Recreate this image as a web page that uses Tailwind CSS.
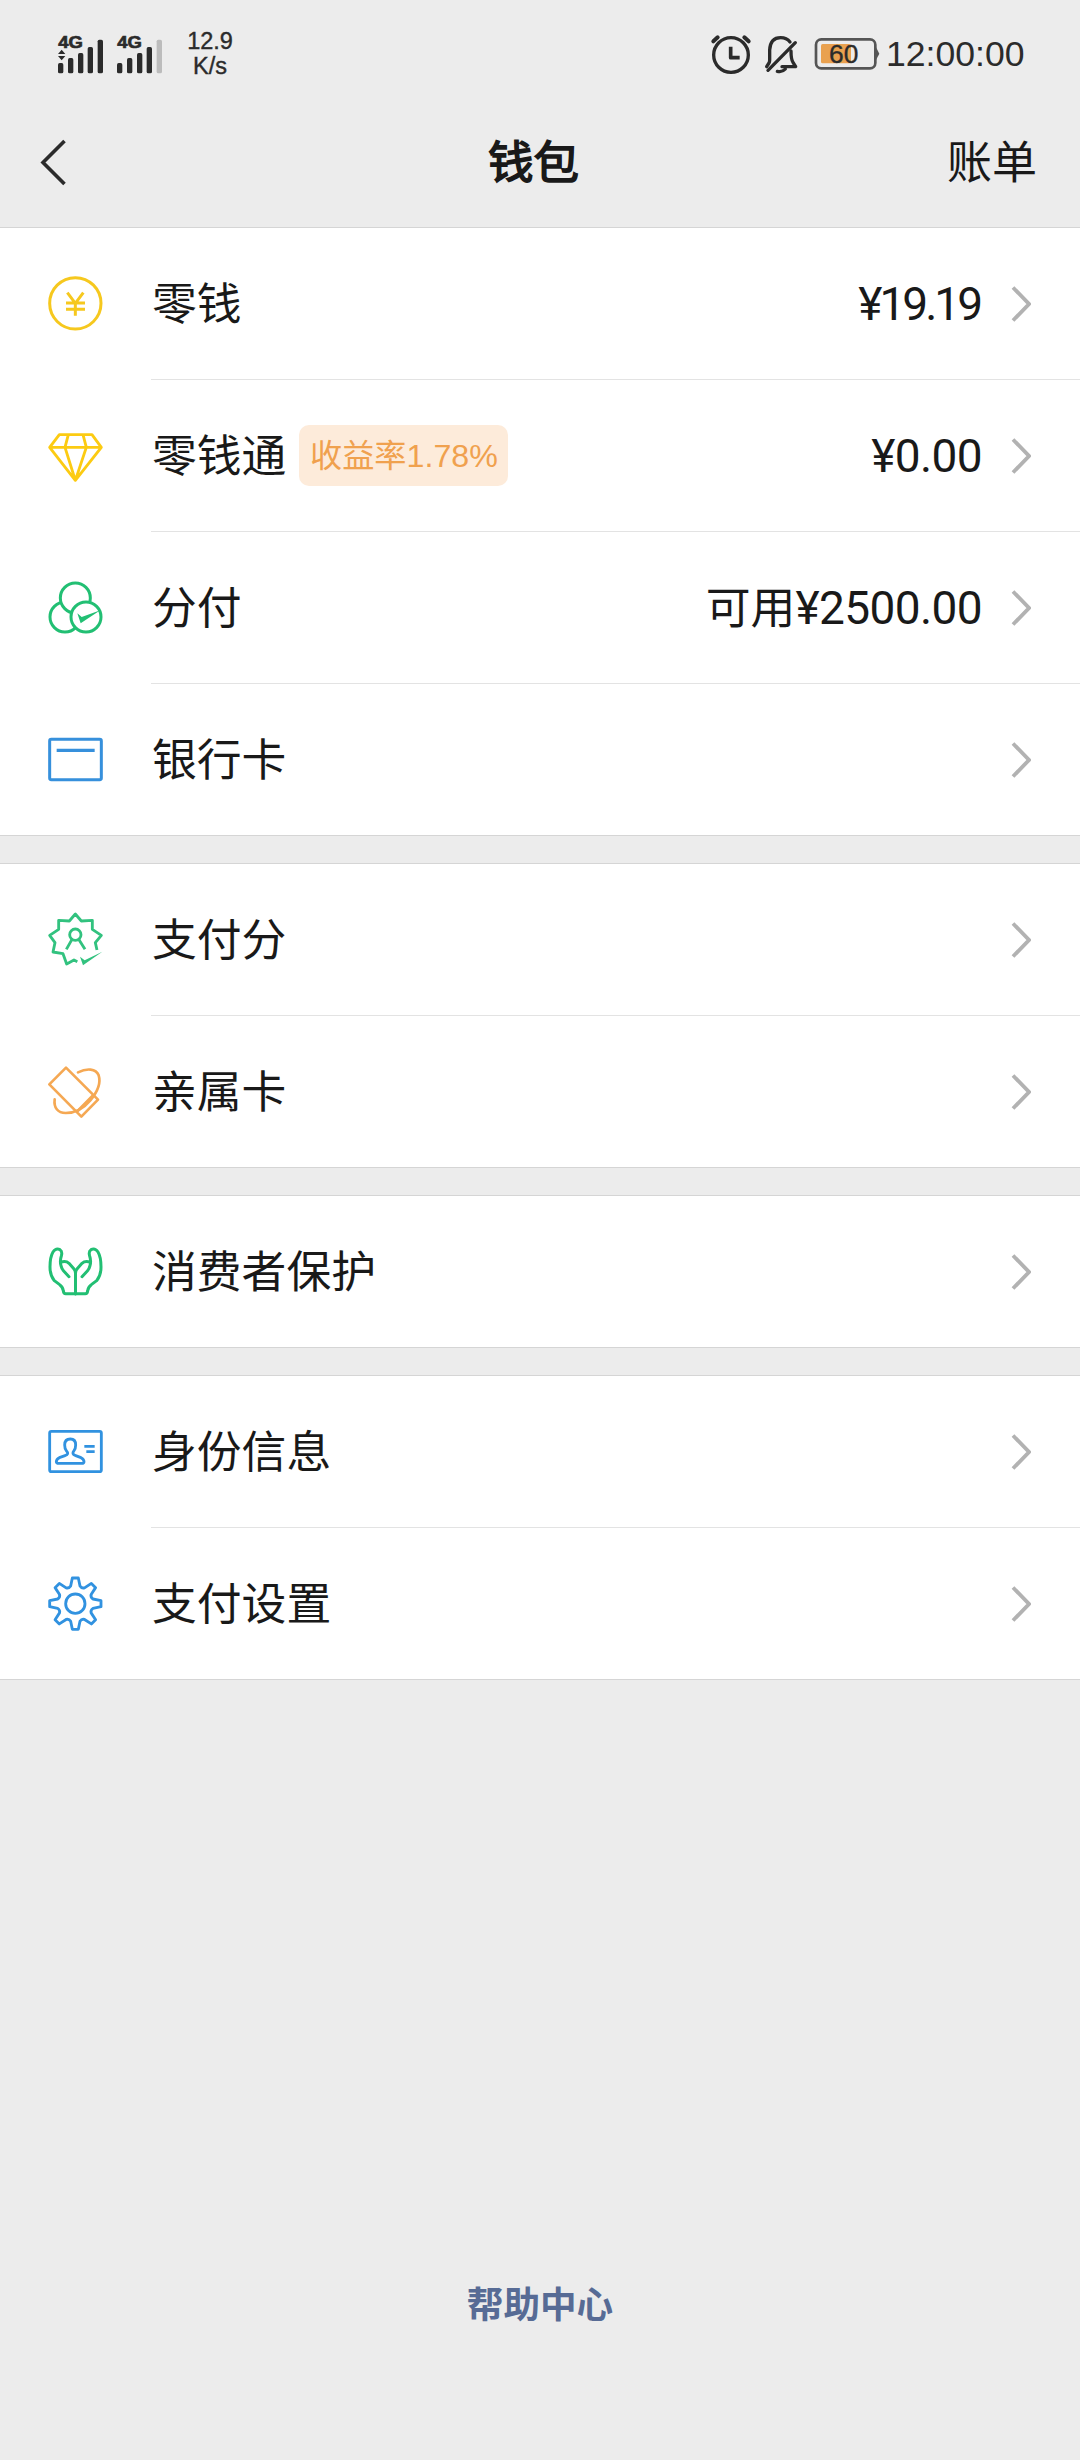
<!DOCTYPE html>
<html lang="zh-CN">
<head>
    <meta charset="UTF-8">
    <title>钱包</title>
    <script src="https://cdn.jsdelivr.net/npm/@tailwindcss/browser@4"></script>
</head>
<body class="w-[1080px] h-[2460px] bg-[#ececec] text-[#191919] font-['Noto_Sans_CJK_SC',sans-serif] text-[44.8px] leading-none flex flex-col overflow-hidden">
    <svg class="hidden">
        <symbol id="chevron" viewBox="0 0 20 38">
            <path d="M2 2.5 L18 19 L2 35.5" fill="none" stroke="#b2b2b2" stroke-width="3.8"/>
        </symbol>
    </svg>

    <!-- Status bar -->
    <div class="h-[110px] flex items-start text-[#2b2b2b] font-['Liberation_Sans',sans-serif]">
        <svg class="ml-[40px] mt-[20px] w-[130px] h-[60px]" viewBox="0 0 390 180">
            <g fill="#2b2b2b">
                <text x="55" y="85" font-size="50" font-weight="bold" textLength="74" lengthAdjust="spacingAndGlyphs" stroke="#2b2b2b" stroke-width="2">4G</text>
                <path d="M54 102 L65 89 L76 102Z M54 108 H76 L65 121Z"/>
                <rect x="54" y="129" width="16" height="31" rx="5"/>
                <rect x="84" y="114" width="16" height="46" rx="5"/>
                <rect x="114" y="99" width="16" height="61" rx="5"/>
                <rect x="143" y="81" width="16" height="79" rx="5"/>
                <rect x="173" y="59" width="16" height="101" rx="5"/>
                <text x="232" y="85" font-size="50" font-weight="bold" textLength="74" lengthAdjust="spacingAndGlyphs" stroke="#2b2b2b" stroke-width="2">4G</text>
                <rect x="231" y="129" width="16" height="31" rx="5"/>
                <rect x="261" y="114" width="16" height="46" rx="5"/>
                <rect x="291" y="99" width="16" height="61" rx="5"/>
                <rect x="320" y="81" width="16" height="79" rx="5"/>
                <rect x="350" y="59" width="16" height="101" rx="5" fill="#bcbcbc"/>
            </g>
        </svg>
        <div class="mt-[29px] w-[80px] text-center text-[23.5px] leading-[25px] [-webkit-text-stroke:0.4px]">12.9<br>K/s</div>
        <svg class="ml-[440px] mt-[20px] w-[194px] h-[70px]" viewBox="0 0 582 210">
            <g fill="none" stroke="#2b2b2b" stroke-width="10" stroke-linecap="round" stroke-linejoin="round">
                <circle cx="123" cy="105" r="52"/>
                <path d="M122 80 V113 H149" stroke-width="11" stroke-linecap="butt"/>
                <path d="M70 64 L83 52 M176 64 L163 52" stroke-width="12"/>
                <path d="M230 140 L237 129 Q239 126 239 120 V90 Q241 53 272 53 Q290 53 300 66"/>
                <path d="M303 93 Q303 118 309 127 L317 140 H276"/>
                <path d="M316 68 L234 151"/>
                <path d="M262 154 Q276 158 286 147"/>
            </g>
            <rect x="378" y="58" width="178" height="87" rx="16" fill="none" stroke="#555" stroke-width="8"/>
            <path d="M558 82 L568 101 L558 120Z" fill="#555"/>
            <rect x="393" y="72" width="90" height="58" rx="5" fill="#e9a14f"/>
            <text x="417" y="128" font-size="78" fill="#2b2b2b" stroke="#2b2b2b" stroke-width="1" textLength="88" lengthAdjust="spacingAndGlyphs">60</text>
        </svg>
        <div class="ml-[2px] mt-[36px] text-[35.6px] leading-[36px]">12:00:00</div>
    </div>

    <!-- Nav bar -->
    <div class="h-[117px] flex items-start">
        <svg class="ml-[38px] mt-[28px] w-[30px] h-[48px]" viewBox="0 0 30 48">
            <path d="M26.500 3 L5 24.500 L26.500 46" fill="none" stroke="#2b2b2b" stroke-width="3.600"/>
        </svg>
        <div class="ml-[420px] mt-[27px] text-[45.5px] [-webkit-text-stroke:1.6px]">钱包</div>
        <div class="ml-auto mr-[43px] mt-[27px] text-[45px]">账单</div>
    </div>

    <div class="flex flex-col gap-[27px]">
        <div class="bg-white border-t border-[#d5d5d5]">
            <div class="h-[152px] flex pl-[45px]">
                <svg class="w-[60px] h-[61px] mt-[45px] mr-[46px]" viewBox="0 0 180 183" fill="none" stroke="#f6c81e" stroke-width="9">
                    <circle cx="91" cy="91" r="77"/>
                    <path d="M67 59 L91 91 L115 59 M63 90 H120 M63 109 H120 M91 90 V128"/>
                </svg>
                <div class="flex-1 flex items-center border-b border-[#e3e3e3] pl-px">
                    <div class="-mt-1">零钱</div>
                    <div class="ml-auto font-['Roboto','Noto_Sans_CJK_SC',sans-serif] text-[46px] tracking-[-3px]">¥19.19</div>
                    <svg class="ml-[31px] mr-[49px] w-[20px] h-[38px]"><use href="#chevron"/></svg>
                </div>
            </div>
            <div class="h-[152px] flex pl-[45px]">
                <svg class="w-[60px] h-[61px] mt-[45px] mr-[46px]" viewBox="0 0 180 183" fill="none" stroke="#fccb12" stroke-width="8.500" stroke-linejoin="round">
                    <path d="M43 29 H141 L169 67 L91 166 L14 67Z M14 67 H169 M70 29 L60 67 L91 166 L124 67 L114 29"/>
                </svg>
                <div class="flex-1 flex items-center border-b border-[#e3e3e3] pl-px">
                    <div class="-mt-1">零钱通</div>
                    <div class="ml-[13px] w-[209px] h-[61px] rounded-[10px] bg-[#fdebda] text-[#f0a14e] text-[32.2px] pt-px flex items-center justify-center whitespace-nowrap font-['Liberation_Sans','Noto_Sans_CJK_SC',sans-serif]">收益率1.78%</div>
                    <div class="ml-auto font-['Roboto','Noto_Sans_CJK_SC',sans-serif] text-[46px] tracking-[-0.6px]">¥0.00</div>
                    <svg class="ml-[29px] mr-[49px] w-[20px] h-[38px]"><use href="#chevron"/></svg>
                </div>
            </div>
            <div class="h-[152px] flex pl-[45px]">
                <svg class="w-[60px] h-[61px] mt-[45px] mr-[46px]" viewBox="0 0 180 183" fill="white" stroke="#22bf73" stroke-width="9">
                    <circle cx="60" cy="120" r="45"/>
                    <circle cx="91" cy="63" r="45"/>
                    <circle cx="123" cy="120" r="45"/>
                    <path d="M97 109 L110 120 L166 100 L107 139Z" fill="#22bf73" stroke="none"/>
                </svg>
                <div class="flex-1 flex items-center border-b border-[#e3e3e3] pl-px">
                    <div class="-mt-1">分付</div>
                    <div class="ml-auto flex items-center">
                        <span class="-mt-1">可用</span>
                        <span class="font-['Roboto',sans-serif] text-[46px] tracking-[-0.6px]">¥2500.00</span>
                    </div>
                    <svg class="ml-[29px] mr-[49px] w-[20px] h-[38px]"><use href="#chevron"/></svg>
                </div>
            </div>
            <div class="h-[152px] flex pl-[45px] border-b border-[#d5d5d5]">
                <svg class="w-[60px] h-[61px] mt-[45px] mr-[46px]" viewBox="0 0 180 183" fill="none" stroke="#3690dc" stroke-width="9">
                    <rect x="14" y="31" width="155" height="121" rx="5"/>
                    <path d="M35 64 H149" stroke-width="10"/>
                </svg>
                <div class="flex-1 flex items-center pl-px">
                    <div class="-mt-1">银行卡</div>
                    <svg class="ml-auto mr-[49px] w-[20px] h-[38px]"><use href="#chevron"/></svg>
                </div>
            </div>
        </div>

        <div class="bg-white border-t border-[#d5d5d5]">
            <div class="h-[152px] flex pl-[45px]">
                <svg class="w-[60px] h-[61px] mt-[45px] mr-[46px]" viewBox="0 0 180 183" fill="none" stroke="#32c27f" stroke-width="8.500" stroke-linejoin="round">
                    <path d="M156 123 L151 101 L169 79 L142 61 L142 34 L109 36 L91 15 L73 36 L41 34 L41 61 L14 79 L30 101 L24 129 L54 134 L65 165 L87 153 L97 158"/>
                    <circle cx="91" cy="77" r="17"/>
                    <path d="M81 91 L64 121 M101 91 L120 121"/>
                    <path d="M105 143 L119 154 L172 128 L114 169Z" fill="#32c27f" stroke="none"/>
                </svg>
                <div class="flex-1 flex items-center border-b border-[#e3e3e3] pl-px">
                    <div class="-mt-1">支付分</div>
                    <svg class="ml-auto mr-[49px] w-[20px] h-[38px]"><use href="#chevron"/></svg>
                </div>
            </div>
            <div class="h-[152px] flex pl-[45px] border-b border-[#d5d5d5]">
                <svg class="w-[60px] h-[61px] mt-[45px] mr-[46px]" viewBox="0 0 180 183" fill="none" stroke="#f5a853" stroke-width="8" stroke-linejoin="round" stroke-linecap="round">
                    <path d="M63 20 L159 116 L109 167 L13 70Z M145 102 L95 153"/>
                    <path d="M99 34 C125 21 153 22 161 43 C169 68 155 95 136 118 C115 143 88 156 62 156 C38 156 26 140 29 115"/>
                </svg>
                <div class="flex-1 flex items-center pl-px">
                    <div class="-mt-1">亲属卡</div>
                    <svg class="ml-auto mr-[49px] w-[20px] h-[38px]"><use href="#chevron"/></svg>
                </div>
            </div>
        </div>

        <div class="bg-white border-t border-[#d5d5d5]">
            <div class="h-[152px] flex pl-[45px] border-b border-[#d5d5d5]">
                <svg class="w-[60px] h-[61px] mt-[45px] mr-[46px]" viewBox="0 0 180 183" fill="none" stroke="#22bf73" stroke-width="9" stroke-linejoin="round" stroke-linecap="round">
                    <g id="hand">
                        <path d="M91.500 158 H62 Q56 158 55 150 Q54 138 44 131 L28 119 Q15 104 15 78 Q15 48 24 33 Q33 20 45 26 Q53 31 49 45 Q44 60 48 74 Q50 84 56 90 L72 107"/>
                        <path d="M47 64 Q62 58 72 67 L87 84 Q91.500 89 91.500 97 V158"/>
                    </g>
                    <use href="#hand" transform="translate(183 0) scale(-1 1)"/>
                </svg>
                <div class="flex-1 flex items-center pl-px">
                    <div class="-mt-1">消费者保护</div>
                    <svg class="ml-auto mr-[49px] w-[20px] h-[38px]"><use href="#chevron"/></svg>
                </div>
            </div>
        </div>

        <div class="bg-white border-t border-[#d5d5d5]">
            <div class="h-[152px] flex pl-[45px]">
                <svg class="w-[60px] h-[61px] mt-[45px] mr-[46px]" viewBox="0 0 180 183" fill="none" stroke="#3192e0" stroke-width="8.500" stroke-linejoin="round">
                    <rect x="14" y="31" width="155" height="121" rx="5"/>
                    <path d="M68 98 Q69 94 64 89 Q59 82 59 72 Q59 54 76 54 Q92 54 92 72 Q92 82 87 89 Q83 94 84 98 Q85 102 92 104 L108 110 Q117 115 117 122 Q117 127 110 127 H42 Q34 127 34 122 Q34 115 43 110 L60 104 Q67 102 68 98Z"/>
                    <path d="M118 76 H149 M124 92 H149"/>
                </svg>
                <div class="flex-1 flex items-center border-b border-[#e3e3e3] pl-px">
                    <div class="-mt-1">身份信息</div>
                    <svg class="ml-auto mr-[49px] w-[20px] h-[38px]"><use href="#chevron"/></svg>
                </div>
            </div>
            <div class="h-[152px] flex pl-[45px] border-b border-[#d5d5d5]">
                <svg class="w-[60px] h-[61px] mt-[45px] mr-[46px]" viewBox="0 0 180 183" fill="none" stroke="#3192e0" stroke-width="8.500" stroke-linejoin="round">
                    <g transform="translate(91 92)">
                        <circle r="29"/>
                        <path d="M-14 -53 L-9 -77 H9 L14 -53 Q19 -45 27.600 -47.400 L48.100 -60.800 L60.800 -48.100 L47.400 -27.600 Q45 -19 53 -14 L77 -9 V9 L53 14 Q45 19 47.400 27.600 L60.800 48.100 L48.100 60.800 L27.600 47.400 Q19 45 14 53 L9 77 H-9 L-14 53 Q-19 45 -27.600 47.400 L-48.100 60.800 L-60.800 48.100 L-47.400 27.600 Q-45 19 -53 14 L-77 9 V-9 L-53 -14 Q-45 -19 -47.400 -27.600 L-60.800 -48.100 L-48.100 -60.800 L-27.600 -47.400 Q-19 -45 -14 -53Z"/>
                    </g>
                </svg>
                <div class="flex-1 flex items-center pl-px">
                    <div class="-mt-1">支付设置</div>
                    <svg class="ml-auto mr-[49px] w-[20px] h-[38px]"><use href="#chevron"/></svg>
                </div>
            </div>
        </div>
    </div>

    <div class="mt-auto mb-[138px] text-center text-[36.6px] font-bold text-[#576b95]">帮助中心</div>
</body>
</html>
